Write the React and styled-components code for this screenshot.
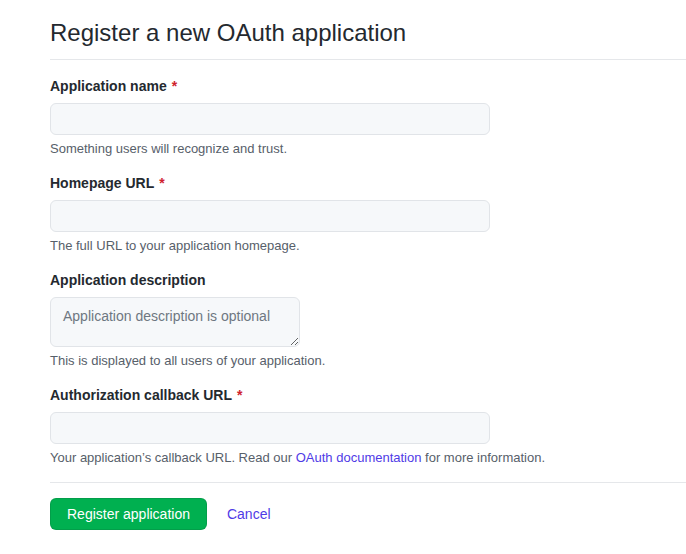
import React from "react";
import styled, { createGlobalStyle } from "styled-components";

const Global = createGlobalStyle`
  html, body { margin: 0; padding: 0; background: #ffffff; }
  body { font-family: "Liberation Sans", Arial, sans-serif; color: #24292f; }
  * { box-sizing: border-box; }
`;

const Page = styled.div`
  padding: 15px 0 0 50px;
  width: 686px;
`;

const Header = styled.div`
  border-bottom: 1px solid #e5e7ea;
  padding-bottom: 8px;
  margin-bottom: 16px;
`;

const Title = styled.h1`
  margin: 0;
  font-size: 24px;
  font-weight: 400;
  line-height: 36px;
  color: #24292f;
`;

const Form = styled.form`
  display: flex;
  flex-direction: column;
`;

const Group = styled.div`
  display: flex;
  flex-direction: column;
  margin-bottom: 15px;
`;

const Label = styled.label`
  font-size: 14px;
  font-weight: 700;
  line-height: 20px;
  color: #24292f;
  margin-bottom: 7px;
`;

const Req = styled.span`
  color: #cf222e;
  margin-left: 5px;
`;

const Input = styled.input`
  width: 440px;
  height: 32px;
  border: 1px solid #e1e4e8;
  border-radius: 6px;
  background: #f6f8fa;
  padding: 5px 12px;
  font: 14px "Liberation Sans", Arial, sans-serif;
  outline: none;
`;

const Area = styled.textarea`
  width: 250px;
  height: 50px;
  border: 1px solid #e1e4e8;
  border-radius: 6px;
  background: #f6f8fa;
  padding: 8px 12px;
  font: 14px/20px "Liberation Sans", Arial, sans-serif;
  color: #24292f;
  outline: none;
  resize: both;
  display: block;
  &::placeholder { color: #6e7781; }
`;

const Note = styled.p`
  margin: 5px 0 0;
  font-size: 13px;
  line-height: 18px;
  color: #57606a;
`;

const Link = styled.a`
  color: #4f3be6;
  text-decoration: none;
`;

const Footer = styled.div`
  border-top: 1px solid #e5e7ea;
  padding-top: 15px;
  display: flex;
  align-items: center;
  gap: 20px;
`;

const Primary = styled.button`
  height: 32px;
  padding: 0 16px;
  border: 1px solid rgba(27, 31, 36, 0.12);
  border-radius: 6px;
  background: #00b050;
  color: #ffffff;
  font: 14px "Liberation Sans", Arial, sans-serif;
  cursor: pointer;
`;

const CancelLink = styled.a`
  color: #4f3be6;
  font-size: 14px;
  text-decoration: none;
`;

export default function App() {
  return (
    <>
      <Global />
      <Page>
        <Header>
          <Title>Register a new OAuth application</Title>
        </Header>
        <Form onSubmit={(e) => e.preventDefault()}>
          <Group>
            <Label>Application name<Req>*</Req></Label>
            <Input type="text" />
            <Note>Something users will recognize and trust.</Note>
          </Group>
          <Group>
            <Label>Homepage URL<Req>*</Req></Label>
            <Input type="text" />
            <Note>The full URL to your application homepage.</Note>
          </Group>
          <Group>
            <Label>Application description</Label>
            <Area placeholder="Application description is optional" />
            <Note>This is displayed to all users of your application.</Note>
          </Group>
          <Group>
            <Label>Authorization callback URL<Req>*</Req></Label>
            <Input type="text" />
            <Note>
              Your application’s callback URL. Read our{" "}
              <Link href="#">OAuth documentation</Link> for more information.
            </Note>
          </Group>
          <Footer>
            <Primary type="submit">Register application</Primary>
            <CancelLink href="#">Cancel</CancelLink>
          </Footer>
        </Form>
      </Page>
    </>
  );
}
